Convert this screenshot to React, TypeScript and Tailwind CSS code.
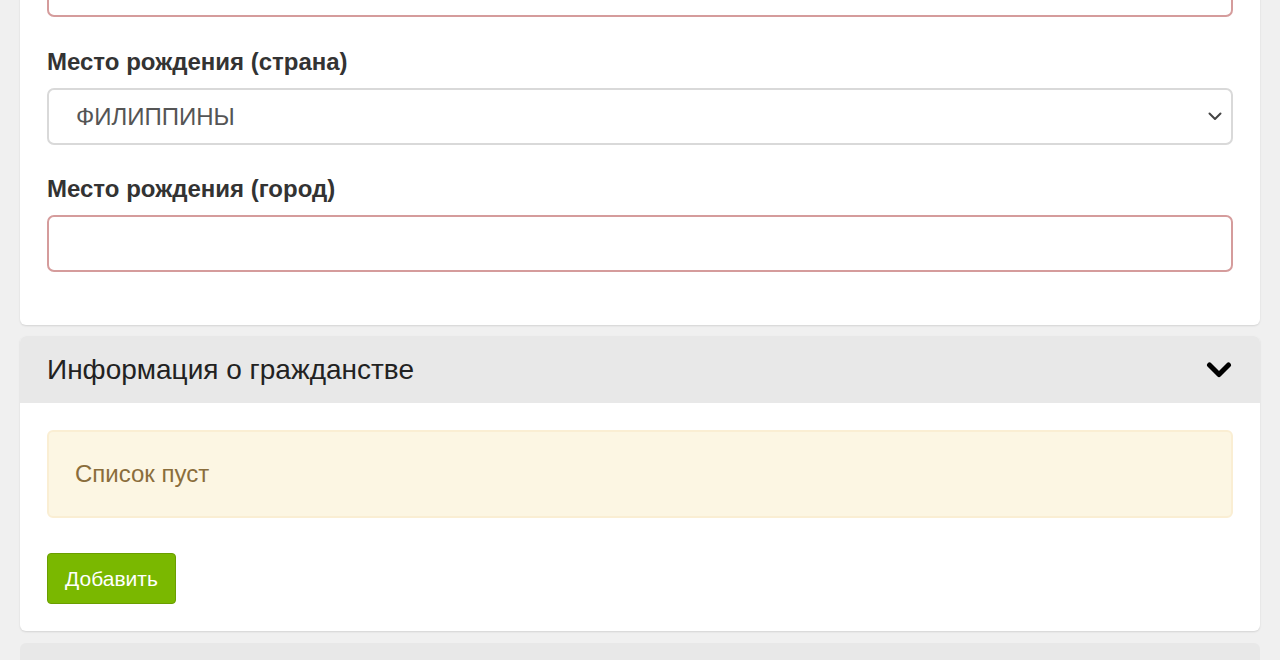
import React from 'react';

function ChevronSmall() {
    return (
        <svg width="14" height="9" viewBox="0 0 14 9" className="text-[#444]">
            <path d="M1.5 1.5 L7 7 L12.5 1.5" fill="none" stroke="currentColor" strokeWidth="2" strokeLinecap="round" strokeLinejoin="round" />
        </svg>
    );
}

function ChevronBold() {
    return (
        <svg width="26" height="18" viewBox="0 0 26 18" className="text-black">
            <path d="M3.5 4 L13 13.5 L22.5 4" fill="none" stroke="currentColor" strokeWidth="5" strokeLinecap="round" strokeLinejoin="round" />
        </svg>
    );
}

export default function App() {
    return (
        <div className="h-[660px] overflow-hidden bg-[#f0f0f0] px-[20px] font-['Liberation_Sans',Arial,sans-serif] text-[#333]">
            {/* Личные данные (хвост карточки) */}
            <div className="-mt-[40px] rounded-b-[6px] bg-white px-[27px] pb-[53px] shadow-[0_1px_2px_rgba(0,0,0,0.12)]">
                <div className="h-[57px] rounded-[7px] border-2 border-[#d59c9c] bg-white"></div>

                <div className="mt-[30px]">
                    <label className="block text-[24px] font-bold leading-[30px] text-[#333]">Место рождения (страна)</label>
                    <div className="mt-[11px] flex h-[57px] items-center justify-between rounded-[7px] border-2 border-[#d9d9d9] bg-white pl-[27px] pr-[9px]">
                        <span className="text-[24px] text-[#555]">ФИЛИППИНЫ</span>
                        <ChevronSmall />
                    </div>
                </div>

                <div className="mt-[29px]">
                    <label className="block text-[24px] font-bold leading-[30px] text-[#333]">Место рождения (город)</label>
                    <div className="mt-[11px] h-[57px] rounded-[7px] border-2 border-[#d59c9c] bg-white"></div>
                </div>
            </div>

            {/* Гражданство */}
            <div className="mt-[11px] overflow-hidden rounded-[6px] bg-white shadow-[0_1px_2px_rgba(0,0,0,0.12)]">
                <div className="flex h-[67px] items-center justify-between bg-[#e8e8e8] pl-[27px] pr-[28px]">
                    <span className="text-[28px] text-[#222]">Информация о гражданстве</span>
                    <ChevronBold />
                </div>
                <div className="p-[27px]">
                    <div className="flex h-[88px] items-center rounded-[6px] border-2 border-[#faeed3] bg-[#fcf6e3] px-[26px]">
                        <span className="text-[24px] text-[#8a6d3b]">Список пуст</span>
                    </div>
                    <button className="mt-[35px] h-[51px] w-[129px] rounded-[4px] border border-[#6a9e00] bg-[#7ab800] text-[21px] text-white">
                        Добавить
                    </button>
                </div>
            </div>

            {/* следующая секция */}
            <div className="mt-[12px] h-[67px] rounded-t-[6px] bg-[#e8e8e8]"></div>
        </div>
    );
}
